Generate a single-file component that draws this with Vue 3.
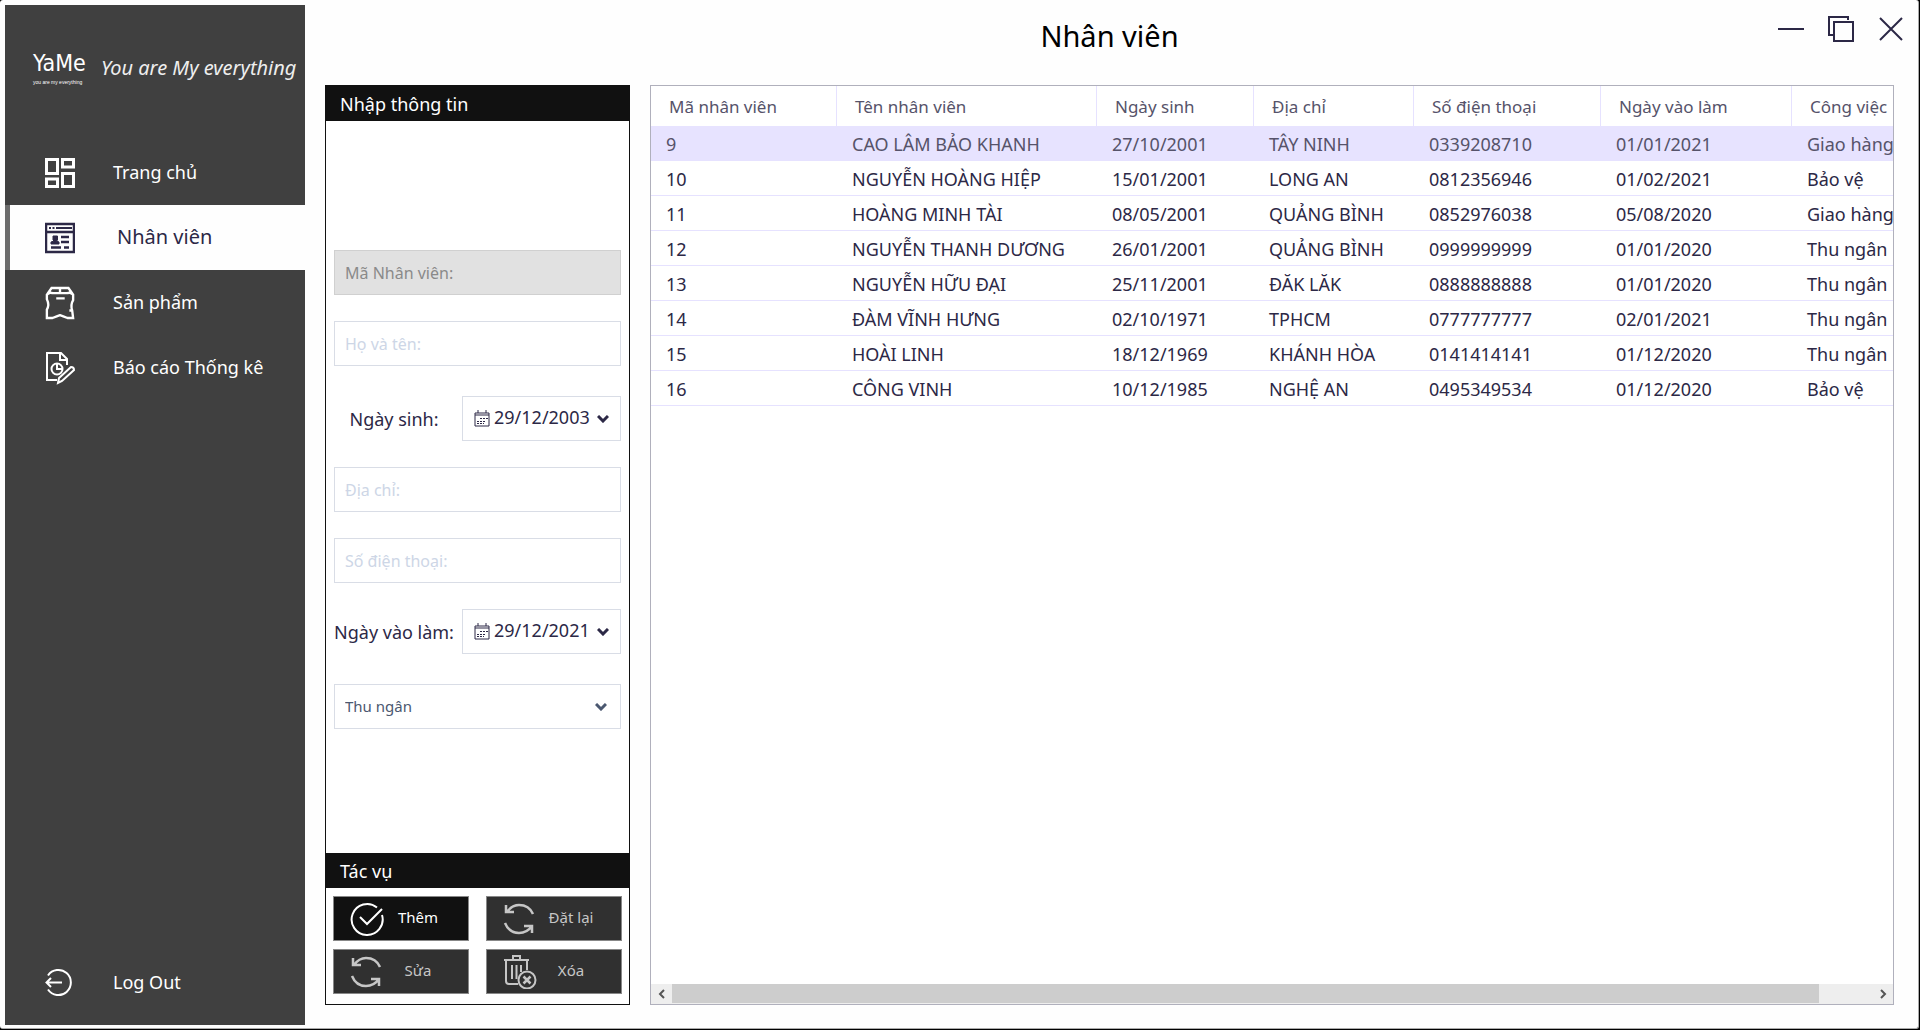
<script setup>
import { ref } from 'vue'

const nav = [
  { id: 'home', label: 'Trang chủ' },
  { id: 'staff', label: 'Nhân viên' },
  { id: 'products', label: 'Sản phẩm' },
  { id: 'reports', label: 'Báo cáo Thống kê' },
]
const active = ref('staff')

const columns = [
  { label: 'Mã nhân viên', cls: 'c-id' },
  { label: 'Tên nhân viên', cls: 'c-name' },
  { label: 'Ngày sinh', cls: 'c-birth' },
  { label: 'Địa chỉ', cls: 'c-addr' },
  { label: 'Số điện thoại', cls: 'c-phone' },
  { label: 'Ngày vào làm', cls: 'c-hired' },
  { label: 'Công việc', cls: 'c-job' },
]
const rows = [
  ['9', 'CAO LÂM BẢO KHANH', '27/10/2001', 'TÂY NINH', '0339208710', '01/01/2021', 'Giao hàng'],
  ['10', 'NGUYỄN HOÀNG HIỆP', '15/01/2001', 'LONG AN', '0812356946', '01/02/2021', 'Bảo vệ'],
  ['11', 'HOÀNG MINH TÀI', '08/05/2001', 'QUẢNG BÌNH', '0852976038', '05/08/2020', 'Giao hàng'],
  ['12', 'NGUYỄN THANH DƯƠNG', '26/01/2001', 'QUẢNG BÌNH', '0999999999', '01/01/2020', 'Thu ngân'],
  ['13', 'NGUYỄN HỮU ĐẠI', '25/11/2001', 'ĐĂK LĂK', '0888888888', '01/01/2020', 'Thu ngân'],
  ['14', 'ĐÀM VĨNH HƯNG', '02/10/1971', 'TPHCM', '0777777777', '02/01/2021', 'Thu ngân'],
  ['15', 'HOÀI LINH', '18/12/1969', 'KHÁNH HÒA', '0141414141', '01/12/2020', 'Thu ngân'],
  ['16', 'CÔNG VINH', '10/12/1985', 'NGHỆ AN', '0495349534', '01/12/2020', 'Bảo vệ'],
]
const selected = ref(0)

const birth = ref('29/12/2003')
const hired = ref('29/12/2021')
const job = ref('Thu ngân')
</script>

<template>
  <div class="window">
    <aside class="sidebar">
      <div class="brand">
        <div class="logo">
          <strong>YaMe</strong>
          <small>you are my everything</small>
        </div>
        <em class="slogan">You are My everything</em>
      </div>
      <nav class="nav">
        <a
          v-for="n in nav"
          :key="n.id"
          href="#"
          class="item"
          :class="{ active: n.id === active }"
          @click.prevent="active = n.id"
        >
          <svg v-if="n.id === 'home'" class="icon" viewBox="0 0 30 30" fill="none" stroke="currentColor" stroke-width="3">
            <path d="M1.500 1.500H12.500V15.500H1.500zM17.500 1.500H28.500V9H17.500zM17.500 15.500H28.500V28.500H17.500zM1.500 21H12.500V28.500H1.500z" />
          </svg>
          <svg v-else-if="n.id === 'staff'" class="icon" viewBox="0 0 30 30" fill="none" stroke="currentColor">
            <path d="M1 1H29V29H1zM1 9H29" stroke-width="2.500" />
            <path d="M4 5H6M7.500 5H9.500M11 5H27" stroke-width="2" />
            <path d="M16 14H24M16 19H24M6 24.500H16M19 24.500H24" stroke-width="2.500" />
            <path d="M8 13H12.500V17L11.500 18L14 19V21H6V19L9 18L8 17z" fill="currentColor" stroke-width="1" />
          </svg>
          <svg v-else-if="n.id === 'products'" class="icon wide" viewBox="0 0 32 36" fill="none" stroke="currentColor" stroke-width="2.500">
            <path d="M2 9L7 2H25L30 9V15Q27 20 29 26L30 34H24Q19 32 16 31Q13 32 8 34H2V25Q5 20 2 14zM2 9Q5 6 8 7.500H24Q27 6 30 9M16 3V7M12 13H21M26 26H30" />
          </svg>
          <svg v-else class="icon" viewBox="0 0 30 34" fill="none" stroke="currentColor" stroke-width="2">
            <path d="M12 29H2V2H16L22 8V14M15 2V9H22" />
            <circle cx="12" cy="18" r="5.500" />
            <path d="M12 13V18H17M13 32L14 27L26 16Q29 16 29 19L17 30z" />
          </svg>
          <span>{{ n.label }}</span>
        </a>
      </nav>
      <a href="#" class="item logout" @click.prevent>
        <svg class="icon" viewBox="0 0 30 30" fill="none" stroke="currentColor" stroke-width="2">
          <path d="M3 7.500A12.500 12.500 0 1 1 3 21.500M17 14.500H1M6 10L1.500 14.500L6 19" />
        </svg>
        <span>Log Out</span>
      </a>
    </aside>

    <main class="content">
      <header class="titlebar">
        <h1>Nhân viên</h1>
        <div class="controls">
          <button type="button" aria-label="Thu nhỏ">
            <svg viewBox="0 0 26 26" fill="none" stroke="currentColor" stroke-width="2"><path d="M0 13H26" /></svg>
          </button>
          <button type="button" aria-label="Phóng to">
            <svg viewBox="0 0 26 26" fill="none" stroke="currentColor" stroke-width="2"><path d="M5 19H1V1H20V4M6 6H25V25H6z" /></svg>
          </button>
          <button type="button" aria-label="Đóng">
            <svg viewBox="0 0 26 26" fill="none" stroke="currentColor" stroke-width="2"><path d="M2 2L24 24M24 2L2 24" /></svg>
          </button>
        </div>
      </header>

      <div class="body">
        <form class="panel" @submit.prevent>
          <h2>Nhập thông tin</h2>
          <div class="fields">
            <div class="group">
              <input class="box" type="text" disabled placeholder="Mã Nhân viên:" aria-label="Mã Nhân viên" />
              <input class="box" type="text" placeholder="Họ và tên:" aria-label="Họ và tên" />
            </div>
            <div class="group">
              <div class="date-row">
                <label for="birth">Ngày sinh:</label>
                <div class="box date">
                  <svg class="cal" viewBox="0 0 16 17" fill="none" stroke="currentColor"><path d="M1 3H15V16H1zM1 5H15M4 0V3M12 0V3" /><path d="M6 8.500H14M3 11.500H12M3 13.500H10" stroke-dasharray="2 1" /></svg>
                  <input id="birth" v-model="birth" type="text" />
                  <svg class="chev" viewBox="0 0 12 8" fill="none" stroke="currentColor" stroke-width="3"><path d="M1 1L6 6L11 1" /></svg>
                </div>
              </div>
              <input class="box" type="text" placeholder="Địa chỉ:" aria-label="Địa chỉ" />
              <input class="box" type="text" placeholder="Số điện thoại:" aria-label="Số điện thoại" />
              <div class="date-row">
                <label for="hired">Ngày vào làm:</label>
                <div class="box date">
                  <svg class="cal" viewBox="0 0 16 17" fill="none" stroke="currentColor"><path d="M1 3H15V16H1zM1 5H15M4 0V3M12 0V3" /><path d="M6 8.500H14M3 11.500H12M3 13.500H10" stroke-dasharray="2 1" /></svg>
                  <input id="hired" v-model="hired" type="text" />
                  <svg class="chev" viewBox="0 0 12 8" fill="none" stroke="currentColor" stroke-width="3"><path d="M1 1L6 6L11 1" /></svg>
                </div>
              </div>
            </div>
            <div class="box job">
              <select v-model="job" aria-label="Công việc">
                <option>Thu ngân</option>
                <option>Bảo vệ</option>
                <option>Giao hàng</option>
              </select>
              <svg class="chev" viewBox="0 0 12 8" fill="none" stroke="currentColor" stroke-width="3"><path d="M1 1L6 6L11 1" /></svg>
            </div>
          </div>
          <h2>Tác vụ</h2>
          <div class="actions">
            <button type="submit" class="act primary">
              <svg viewBox="0 0 34 34" fill="none" stroke="currentColor" stroke-width="2"><path d="M27 5.500A15.500 15.500 0 1 0 32 13M10 15L17 22L32 7" /></svg>
              <span>Thêm</span>
            </button>
            <button type="button" class="act">
              <svg viewBox="0 0 34 34" fill="none" stroke="currentColor" stroke-width="2.500"><path d="M3 3V10H11M4 10Q9 3 16 3Q26 3 30 12M29 31V24H21M29 24Q24 31 16 31Q6 31 2 21" /></svg>
              <span>Đặt lại</span>
            </button>
            <button type="button" class="act">
              <svg viewBox="0 0 34 34" fill="none" stroke="currentColor" stroke-width="2.500"><path d="M3 3V10H11M4 10Q9 3 16 3Q26 3 30 12M29 31V24H21M29 24Q24 31 16 31Q6 31 2 21" /></svg>
              <span>Sửa</span>
            </button>
            <button type="button" class="act">
              <svg viewBox="0 0 34 34" fill="none" stroke="currentColor" stroke-width="2"><path d="M1 5H26M10 5V1H17V5M3 5V26Q3 29 6 29H15M24 5V15M9 10V24M13.500 10V24M18 10V17" /><circle cx="24" cy="25" r="8.500" /><path d="M20.500 21.500L27.500 28.500M27.500 21.500L20.500 28.500" stroke-width="2.500" /></svg>
              <span>Xóa</span>
            </button>
          </div>
        </form>

        <section class="grid">
          <div class="viewport">
            <table>
              <thead>
                <tr>
                  <th v-for="c in columns" :key="c.label" :class="c.cls" scope="col">{{ c.label }}</th>
                </tr>
              </thead>
              <tbody>
                <tr v-for="(r, i) in rows" :key="r[0]" :class="{ selected: i === selected }" @click="selected = i">
                  <td v-for="(v, j) in r" :key="j">{{ v }}</td>
                </tr>
              </tbody>
            </table>
          </div>
          <div class="scroll">
            <button type="button" aria-label="Cuộn trái">
              <svg viewBox="0 0 8 10" fill="none" stroke="currentColor" stroke-width="2"><path d="M6 1L2 5L6 9" /></svg>
            </button>
            <div class="track"><div class="thumb"></div></div>
            <button type="button" aria-label="Cuộn phải">
              <svg viewBox="0 0 8 10" fill="none" stroke="currentColor" stroke-width="2"><path d="M2 1L6 5L2 9" /></svg>
            </button>
          </div>
        </section>
      </div>
    </main>
  </div>
</template>

<style>
html,
body {
  height: 100%;
  background: #000;
}
#app {
  height: 100%;
}
</style>

<style scoped>
* {
  box-sizing: border-box;
}
.window {
  display: flex;
  height: calc(100% - 1px);
  margin-right: 1px;
  padding: 5px 4px 3px 5px;
  background: #fefefe;
  border: solid #aaa;
  border-width: 0 1px 1px 0;
  border-radius: 3px;
  font-family: "Noto Sans", "Open Sans", sans-serif;
  font-size: 18px;
  color: #2c2846;
}
button,
input,
select {
  font: inherit;
  color: inherit;
}

.sidebar {
  display: flex;
  flex-direction: column;
  flex: none;
  width: 300px;
  padding-bottom: 10px;
  background: #404040;
  color: #fff;
}
.brand {
  display: flex;
  align-items: center;
  height: 124px;
  margin-bottom: 11px;
  padding-left: 28px;
  gap: 18px;
}
.logo {
  display: flex;
  flex-direction: column;
  flex: none;
  width: 50px;
  white-space: nowrap;
}
.logo strong {
  font-family: "Liberation Sans Narrow", "DejaVu Sans Condensed", sans-serif;
  font-size: 23px;
  line-height: 30px;
  font-weight: 400;
}
.logo small {
  font-family: "Liberation Sans", sans-serif;
  font-size: 5px;
  line-height: 8px;
}
.slogan {
  font-size: 20px;
  color: #eee;
  white-space: nowrap;
}
.item {
  display: flex;
  align-items: center;
  height: 65px;
  padding-left: 40px;
  gap: 38px;
  color: #fff;
  text-decoration: none;
}
.item span {
  padding-bottom: 2px;
}
.item.active {
  padding-left: 35px;
  border-left: 5px solid #6c6c6c;
  gap: 42px;
  background: #fefefe;
  font-size: 20px;
  color: #2c2846;
}
.icon {
  width: 30px;
  height: 34px;
}
.icon.wide {
  height: 36px;
}
.logout {
  margin-top: auto;
}

.content {
  display: flex;
  flex-direction: column;
  flex: 1;
  min-width: 0;
  padding: 0 20px 20px;
}
.titlebar {
  display: grid;
  grid-template-columns: 1fr auto 1fr;
  height: 80px;
}
.titlebar h1 {
  grid-column: 2;
  margin: 0;
  font-size: 29px;
  line-height: 62px;
  font-weight: 400;
  color: #000;
}
.controls {
  display: flex;
  justify-content: flex-end;
  align-items: flex-start;
  gap: 24px;
  margin-right: -10px;
  padding-top: 11px;
}
.controls button {
  width: 26px;
  height: 26px;
  padding: 0;
  border: 0;
  background: none;
}
.controls svg {
  display: block;
}

.body {
  display: flex;
  flex: 1;
  gap: 20px;
  min-height: 0;
}
.panel {
  display: flex;
  flex-direction: column;
  flex: none;
  width: 305px;
  border: 1px solid #111;
  background: #fff;
}
.panel h2 {
  margin: 0;
  padding-left: 14px;
  height: 35px;
  background: #111;
  color: #fff;
  font-size: 18px;
  line-height: 37px;
  font-weight: 400;
}
.fields {
  display: flex;
  flex-direction: column;
  flex: 1;
  gap: 30px;
  padding: 129px 8px 0;
}
.group {
  display: flex;
  flex-direction: column;
  gap: 26px;
}
.box {
  width: 100%;
  height: 45px;
  padding: 0 10px;
  border: 1px solid #d9dde6;
  border-radius: 0;
  background: #fff;
  font-size: 16px;
}
.box::placeholder {
  color: #cdd6e6;
  opacity: 1;
}
.box:disabled {
  background: #e1e1e1;
  border-color: #d0d0d0;
}
.box:disabled::placeholder {
  color: #8a8a8a;
}
.date-row {
  display: flex;
  align-items: center;
}
.date-row label {
  flex: 1;
  text-align: center;
  white-space: nowrap;
  padding-right: 8px;
}
.date {
  display: flex;
  align-items: center;
  flex: none;
  width: 159px;
  padding: 0 11px;
  gap: 4px;
  font-size: 18px;
}
.date input {
  flex: 1;
  min-width: 0;
  padding: 0 0 3px;
  border: 0;
  background: none;
}
.cal {
  flex: none;
  width: 16px;
  height: 17px;
}
.chev {
  flex: none;
  width: 12px;
  height: 8px;
}
.job {
  display: flex;
  align-items: center;
  padding-right: 13px;
  font-size: 15px;
  color: #4b5870;
}
.job select {
  flex: 1;
  padding: 0 0 2px;
  border: 0;
  background: none;
  appearance: none;
}
.actions {
  display: grid;
  grid-template-columns: 1fr 1fr;
  grid-auto-rows: 45px;
  gap: 8px 17px;
  padding: 8px 7px 10px;
}
.act {
  display: flex;
  align-items: center;
  padding: 0 0 0 16px;
  border: 1px solid #888;
  background: #303030;
  color: #c6c6c6;
  font-size: 15px;
}
.act.primary {
  background: #111;
  color: #fff;
}
.act svg {
  flex: none;
  width: 34px;
  height: 34px;
}
.act span {
  flex: 1;
  padding: 0 16px 3px 0;
  text-align: center;
}

.grid {
  display: flex;
  flex-direction: column;
  flex: 1;
  min-width: 0;
  border: 1px solid #b0b0bc;
  background: #fff;
}
.viewport {
  flex: 1;
  overflow: hidden;
}
table {
  width: 1518px;
  table-layout: fixed;
  border-collapse: separate;
  border-spacing: 0;
}
.c-id { width: 186px; }
.c-name { width: 260px; }
.c-birth { width: 157px; }
.c-addr { width: 160px; }
.c-phone { width: 187px; }
.c-hired { width: 191px; }
th,
td {
  text-align: left;
  font-weight: 400;
  white-space: nowrap;
}
th {
  height: 40px;
  padding: 1px 0 0 18px;
  border-right: 1px solid #e6e2ff;
  font-size: 17px;
  color: #56536a;
}
td {
  height: 35px;
  padding: 2px 0 0 15px;
  border-bottom: 1px solid #e6e2ff;
  line-height: 24px;
}
.selected td {
  background: #e7e3ff;
  color: #56536a;
}
.scroll {
  display: flex;
  height: 20px;
  background: #eee;
}
.scroll button {
  display: flex;
  align-items: center;
  justify-content: center;
  width: 21px;
  padding: 0;
  border: 0;
  background: none;
  color: #555;
}
.scroll svg {
  width: 8px;
  height: 10px;
}
.track {
  flex: 1;
}
.thumb {
  width: 95.6%;
  height: 19px;
  background: #cdcdcd;
}
</style>
